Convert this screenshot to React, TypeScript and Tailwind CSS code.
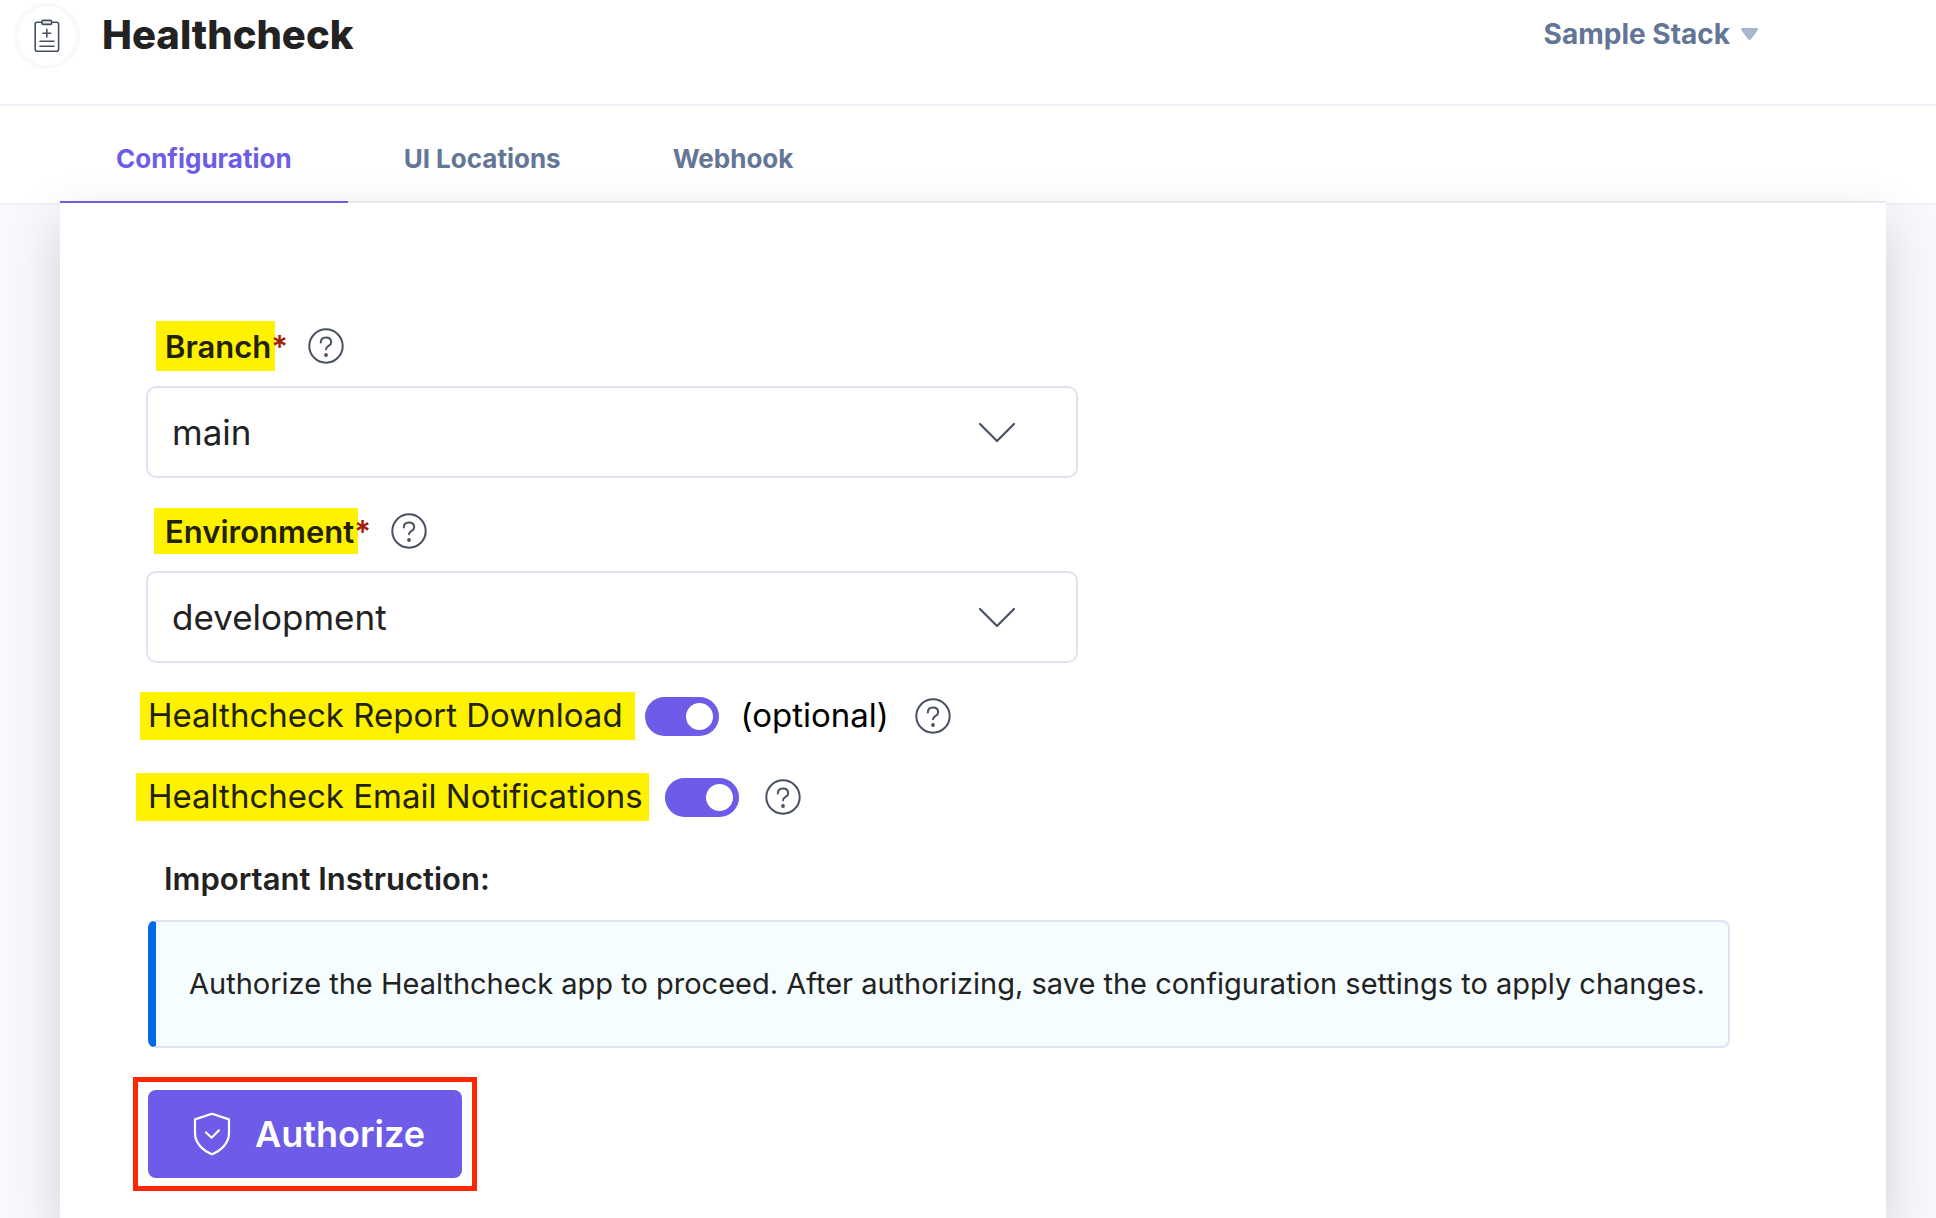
import { useState } from "react";
import clsx from "clsx";

const tabs = ["Configuration", "UI Locations", "Webhook"];

function HelpIcon({ label }: { label: string }) {
  return (
    <button type="button" aria-label={label} className="shrink-0 text-[#475161]">
      <svg width="36" height="36" viewBox="0 0 36 36" fill="none" stroke="currentColor" strokeWidth="2">
        <circle cx="18" cy="18" r="16.7" />
        <path
          d="M12.8 14.6c0-3.2 2.2-5 5.2-5s5.2 1.8 5.2 4.8c0 3.6-5.2 3.2-5.2 6.8"
          strokeLinecap="round"
        />
        <circle cx="18" cy="27" r="1.9" fill="currentColor" stroke="none" />
      </svg>
    </button>
  );
}

function ClipboardIcon() {
  return (
    <svg width="26" height="34" viewBox="0 0 26 34" fill="none" stroke="#475161" strokeWidth="1.6" strokeLinecap="round">
      <rect x="1.2" y="3.2" width="23.4" height="29" rx="2" />
      <rect x="8" y="1.4" width="9.6" height="4" rx="1" fill="#e4e6ea" />
      <path d="M12.8 10.4v7.6M9 14.2h7.6M6 22.2h14M6 27.2h14" />
    </svg>
  );
}

function ShieldIcon() {
  return (
    <svg width="38" height="44" viewBox="0 0 38 44" fill="none" stroke="currentColor" strokeWidth="2.2" strokeLinejoin="round">
      <path d="M19 1.8 36 7.4v13.8c0 9.4-7.2 17.2-17 21-9.8-3.8-17-11.6-17-21V7.4z" />
      <path d="m13 20.5 5.6 5.3 7.4-7.5" strokeLinecap="round" />
    </svg>
  );
}

function SelectField({
  id,
  label,
  options,
  help,
  markClass,
}: {
  id: string;
  label: string;
  options: string[];
  help: string;
  markClass: string;
}) {
  return (
    <div>
      <div className="flex h-12 items-center">
        <label htmlFor={id} className="flex items-center text-[31px] font-semibold">
          <mark className={clsx("flex items-center bg-[#fff200] pt-0.5 text-[#222206]", markClass)}>{label}</mark>
          <span className="-ml-1 pt-0.5 text-[#a31b00]">*</span>
        </label>
        <span className="ml-5 flex">
          <HelpIcon label={help} />
        </span>
      </div>
      <div className="relative mt-4 w-full max-w-[932px]">
        <select
          id={id}
          className="h-[92px] w-full appearance-none rounded-[10px] border-2 border-[#dde3f0] bg-white pl-6 pr-28 text-[35px] text-[#222222]"
        >
          {options.map((option) => (
            <option key={option}>{option}</option>
          ))}
        </select>
        <svg
          className="pointer-events-none absolute right-[62px] top-9"
          width="38"
          height="22"
          viewBox="0 0 38 22"
          fill="none"
          stroke="#475161"
          strokeWidth="2.2"
          strokeLinecap="round"
          strokeLinejoin="round"
        >
          <path d="m2 2 17 17 17-17" />
        </svg>
      </div>
    </div>
  );
}

function Toggle({ id }: { id: string }) {
  const [on, setOn] = useState(true);

  return (
    <input
      id={id}
      type="checkbox"
      role="switch"
      checked={on}
      onChange={() => setOn(!on)}
      className="flex h-[39px] w-[74px] shrink-0 cursor-pointer appearance-none items-center rounded-full bg-[#a9b6cb] px-1.5 before:size-[27px] before:rounded-full before:bg-white before:content-[''] checked:justify-end checked:bg-[#6c5ce7]"
    />
  );
}

export default function App() {
  const [active, setActive] = useState(tabs[0]);

  return (
    <div className="flex min-h-screen flex-col bg-[#f7f9fc] font-['Inter',sans-serif] text-[#222222]">
      {/* Header */}
      <header className="flex h-[106px] items-start justify-between border-b-2 border-[#edf1f7] bg-white pl-3.5 pr-[178px]">
        <div className="flex h-[72px] items-center gap-[22px]">
          <div className="flex size-[66px] items-center justify-center rounded-full border-4 border-[#f7f9fc]">
            <ClipboardIcon />
          </div>
          <h1 className="pb-0.5 text-[40px] font-extrabold">Healthcheck</h1>
        </div>
        <button type="button" className="flex h-[68px] items-center gap-[11px] text-[28px] font-bold text-[#647696]">
          Sample Stack
          <svg width="17" height="13" viewBox="0 0 17 13" fill="#a9b6cb">
            <path d="M1.5 0h14c1.4 0 2 1.4 1 2.4l-6.5 8.9c-.8 1-2.2 1-3 0L.5 2.4C-.4 1.4.1 0 1.5 0z" />
          </svg>
        </button>
      </header>

      {/* Tabs */}
      <nav className="border-b-2 border-[#edf1f7] bg-white pl-[60px]">
        <div role="tablist" className="relative z-10 flex h-[97px]">
          {tabs.map((tab) => (
            <button
              key={tab}
              type="button"
              role="tab"
              aria-selected={active === tab}
              onClick={() => setActive(tab)}
              className={clsx(
                "border-b-2 px-14 pt-2.5 text-[26px] font-bold",
                active === tab ? "border-[#6c5ce7] text-[#6c5ce7]" : "border-transparent text-[#647696]"
              )}
            >
              {tab}
            </button>
          ))}
        </div>
      </nav>

      {/* Configuration */}
      <main className="relative -mt-1 ml-[60px] mr-[50px] flex-1 border-t-2 border-[#e5e9f0] bg-white pb-6 pl-[86px] pr-[156px] pt-[119px] shadow-[0_20px_50px_rgba(0,0,0,0.16)]">
        <form className="flex flex-col gap-[29px]" onSubmit={(e) => e.preventDefault()}>
          <SelectField
            id="branch"
            label="Branch"
            options={["main"]}
            help="About branch"
            markClass="ml-2.5 h-[50px] pl-[9px] pr-1"
          />
          <SelectField
            id="environment"
            label="Environment"
            options={["development"]}
            help="About environment"
            markClass="ml-2 h-[46px] pl-[11px] pr-1"
          />

          <div className="flex h-12 items-center text-[33px]">
            <label htmlFor="report-download" className="-ml-1.5">
              <mark className="flex h-12 items-center bg-[#fff200] pl-2 pr-3 text-[#222206]">
                Healthcheck Report Download
              </mark>
            </label>
            <span className="ml-2.5 flex">
              <Toggle id="report-download" />
            </span>
            <span className="ml-[22px] text-black">(optional)</span>
            <span className="ml-[26px] flex">
              <HelpIcon label="About report download" />
            </span>
          </div>

          <div className="mt-1 flex h-12 items-center text-[33px]">
            <label htmlFor="email-notifications" className="-ml-2.5">
              <mark className="flex h-12 items-center bg-[#fff200] pl-3 pr-1.5 text-[#222206]">
                Healthcheck Email Notifications
              </mark>
            </label>
            <span className="ml-4 flex">
              <Toggle id="email-notifications" />
            </span>
            <span className="ml-[26px] flex">
              <HelpIcon label="About email notifications" />
            </span>
          </div>

          <section className="mt-1.5 pl-0.5">
            <h2 className="flex h-12 items-center pb-0.5 pl-4 text-[31px] font-semibold">Important Instruction:</h2>
            <div className="mt-4 flex min-h-32 items-center overflow-hidden rounded-lg border-y-2 border-l-8 border-r-2 border-y-[#dde3f0] border-l-[#0469e3] border-r-[#dde3f0] bg-[#f5fdff] pl-[33px]">
              <p className="text-[29px]">
                Authorize the Healthcheck app to proceed. After authorizing, save the configuration settings to apply
                changes.
              </p>
            </div>
          </section>

          <div className="-ml-[13px] w-fit border-[5px] border-[#ff2600] px-2.5 py-2">
            <button
              type="submit"
              className="flex h-[88px] items-center gap-6 rounded-lg bg-[#6c5ce7] pl-[45px] pr-[37px] text-[36px] font-semibold text-white"
            >
              <ShieldIcon />
              Authorize
            </button>
          </div>
        </form>
      </main>
    </div>
  );
}
